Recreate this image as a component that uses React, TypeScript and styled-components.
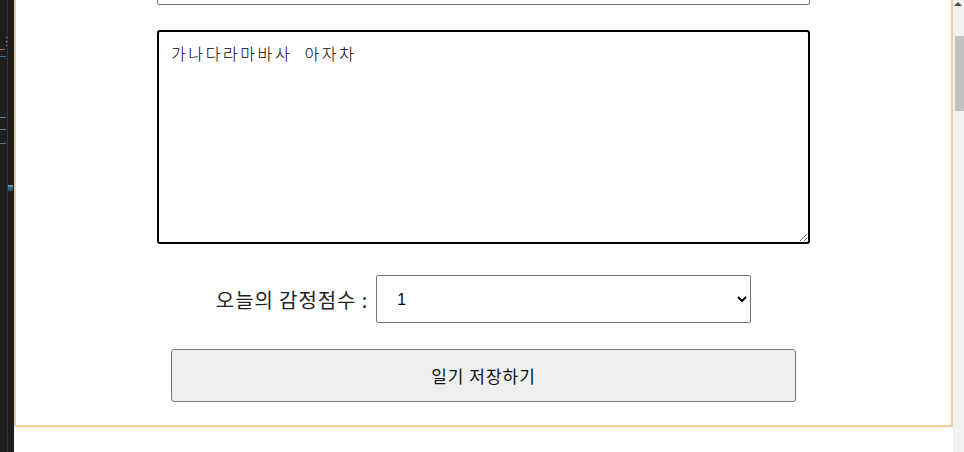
import styled, { createGlobalStyle } from 'styled-components'

const GlobalStyle = createGlobalStyle`
  html,
  body {
    margin: 0;
    padding: 0;
    background: #ffffff;
    font-family: "Noto Sans CJK KR", "Noto Sans", sans-serif;
  }
`

function EditorStrip() {
  return (
    <Strip width="14" height="452" viewBox="0 0 14 452">
      <rect width="14" height="452" fill="#1e1e1e" />
      <rect x="7" width="1" height="452" fill="#353535" />
      <rect x="6" y="37" width="1" height="1" fill="#4ec9b0" />
      <rect x="6" y="41" width="1" height="1" fill="#d4d4d4" />
      <rect x="6" y="45" width="1" height="1" fill="#569cd6" />
      <rect x="0" y="49" width="5" height="1" fill="#a0704a" />
      <rect x="0" y="56" width="6" height="1" fill="#3b6f9a" />
      <rect x="0" y="117" width="6" height="1" fill="#5d7d8e" />
      <rect x="0" y="129" width="6" height="1" fill="#5d7d8e" />
      <rect x="0" y="143" width="6" height="1" fill="#55707e" />
      <rect x="8" y="185" width="5" height="2" fill="#6e8fa3" />
      <rect x="8" y="187" width="5" height="4" fill="#1f5f86" />
    </Strip>
  )
}

function ScrollTrack() {
  return (
    <Scrollbar>
      <ArrowUp width="11" height="8" viewBox="0 0 11 8">
        <path d="M5 2 L9 6 L1 6 Z" fill="#505050" />
      </ArrowUp>
      <Thumb />
    </Scrollbar>
  )
}

export default function App() {
  return (
    <>
      <GlobalStyle />
      <Shell>
        <EditorStrip />
        <Viewport>
          <Panel>
            <AuthorInput defaultValue="" />
            <ContentArea defaultValue="가나다라마바사  아자차" />
            <ScoreRow>
              <ScoreLabel>오늘의 감정점수 :</ScoreLabel>
              <ScoreSelect defaultValue="1">
                <option value="1">1</option>
                <option value="2">2</option>
                <option value="3">3</option>
                <option value="4">4</option>
                <option value="5">5</option>
              </ScoreSelect>
            </ScoreRow>
            <SaveButton type="button">일기 저장하기</SaveButton>
          </Panel>
        </Viewport>
        <ScrollTrack />
      </Shell>
    </>
  )
}

const Shell = styled.div`
  display: flex;
  width: 964px;
  height: 452px;
  overflow: hidden;
`

const Strip = styled.svg`
  display: block;
  flex: 0 0 14px;
`

const Viewport = styled.div`
  flex: 1;
  display: flex;
  flex-direction: column;
  background: #ffffff;
  overflow: hidden;
`

const Panel = styled.div`
  display: flex;
  flex-direction: column;
  align-items: center;
  border: 2px solid #e8d29a;
  border-top: none;
  padding-bottom: 23px;
  box-shadow: 0 1px 2px rgba(0, 0, 0, 0.06);
`

const AuthorInput = styled.input`
  box-sizing: border-box;
  width: 653px;
  height: 40px;
  margin: -35px 0 0;
  border: 1px solid #767676;
  border-radius: 2px;
`

const ContentArea = styled.textarea`
  box-sizing: border-box;
  width: 653px;
  height: 214px;
  margin: 25px 0 0;
  padding: 9px 12px;
  border: 2px solid #000000;
  border-radius: 3px;
  outline: none;
  font-family: "Noto Sans CJK KR", monospace;
  font-size: 16px;
  font-weight: 300;
  letter-spacing: 2.6px;
  color: #000000;
  resize: both;
`

const ScoreRow = styled.div`
  display: flex;
  align-items: center;
  gap: 8px;
  margin-top: 31px;
`

const ScoreLabel = styled.span`
  font-family: "Noto Sans CJK KR", sans-serif;
  font-size: 20px;
  letter-spacing: 0.9px;
  color: #222222;
`

const ScoreSelect = styled.select`
  box-sizing: border-box;
  width: 375px;
  height: 48px;
  padding: 0 14px 0 16px;
  border: 1px solid #767676;
  border-radius: 2px;
  background: #ffffff;
  font-family: "Liberation Sans", sans-serif;
  font-size: 16px;
  color: #000000;
`

const SaveButton = styled.button`
  box-sizing: border-box;
  width: 625px;
  height: 53px;
  margin-top: 26px;
  border: 1px solid #767676;
  border-radius: 3px;
  background: #efefef;
  font-family: "Noto Sans CJK KR", sans-serif;
  font-size: 17px;
  letter-spacing: 1px;
  color: #111111;
`

const Scrollbar = styled.div`
  display: flex;
  flex-direction: column;
  align-items: flex-end;
  flex: 0 0 11px;
  background: #f1f1f1;
`

const ArrowUp = styled.svg`
  display: block;
`

const Thumb = styled.div`
  width: 9px;
  height: 75px;
  margin-top: 28px;
  background: #c1c1c1;
`
